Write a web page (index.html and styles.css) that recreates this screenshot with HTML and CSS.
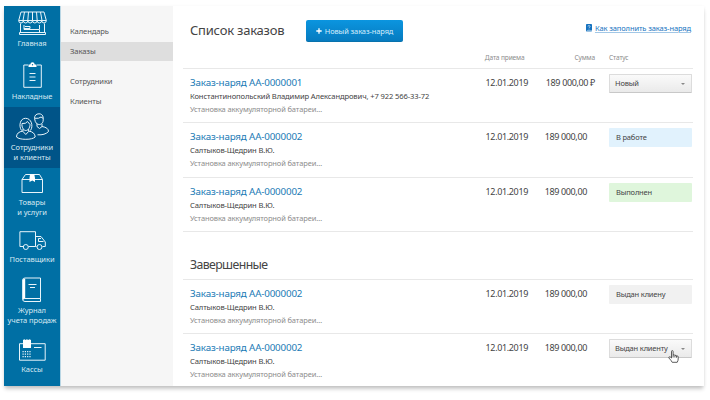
FILE: index.html
```html
<!DOCTYPE html>
<html lang="ru">
<head>
<meta charset="utf-8">
<title>Список заказов</title>
<link rel="stylesheet" href="styles.css">
</head>
<body>
<div class="window">
  <nav class="rail">
    <a class="rail-item home">
      <svg viewBox="4 6 56 32" width="56" height="32"><path d="M21 12H44L46.300 20.500H18.700ZM24.500 12L23 20.500M28.500 12L27.800 20.500M32.500 12V20.500M36.500 12L37.200 20.500M40.500 12L42 20.500"/><path d="M18.700 20.500q0 2.500 2.300 2.500t2.300-2.500q0 2.500 2.300 2.500t2.300-2.500q0 2.500 2.300 2.500t2.300-2.500q0 2.500 2.300 2.500t2.300-2.500q0 2.500 2.300 2.500t2.300-2.500q0 2.500 2.300 2.500t2.300-2.500M20.500 23.500V32.500M44.500 23.500V32.500M19.500 34.500H45.500V32.500H19.500ZM24 25V29.500H39.500V32M39.500 25V29M24 28.500H30V26.500H25"/></svg>
      <span>Главная</span>
    </a>
    <a class="rail-item notes">
      <svg viewBox="4 57 56 34" width="56" height="34"><path d="M28 65H23.800V87.300H41.300V65H37M29.500 73.500H35.500M29.500 77H35.500M29.500 80.500H35.500"/><path class="solid" d="M28.500 67V64.500H30.300Q30.500 62.300 32.500 62.300T34.700 64.500H36.500V67Z"/><circle class="hole" cx="32.500" cy="64.700" r=".7"/></svg>
      <span>Накладные</span>
    </a>
    <a class="rail-item people active">
      <svg viewBox="4 107 56 35" width="56" height="35"><path d="M34.500 118.500C34.500 115.500 36 113.800 39 113.800C42.800 113.800 43.800 117 43 121.500C42 125.500 36.800 125.500 35.300 121.500ZM34.800 118.300Q39 118.800 41 117L43.300 118.500M37 124V126.500L39.500 128.500L42 126.500V124M42 126.500Q48.500 127.500 48.500 131.500Q45 135.300 37.500 134.800"/><path d="M21.500 130.500C18.500 126 20 118.300 25.500 118.300C31.500 118.300 33.500 126 30.500 130.500M22 123.500Q26 124 27.500 121.500L30 124.500C30 128 28 130.500 25.800 130.500C23.500 130.500 21.500 127 22 123.500M23 129V131.500L25.800 134.500L28.600 131.500V129M23 131Q16.500 132 16.500 137Q19 139.300 25.800 139.300T35.200 137Q35 132 28.600 131"/></svg>
      <span>Сотрудники<br>и клиенты</span>
    </a>
    <a class="rail-item goods">
      <svg viewBox="4 168 56 29" width="56" height="29"><path d="M22 179.500L25.500 174.500H39.500L42.500 179.500V192.500H22ZM22 179.500H42.500"/><path class="solid" d="M30 174.300H34.300L35 178V182L32.300 180.500L29.500 182V178Z"/></svg>
      <span>Товары<br>и услуги</span>
    </a>
    <a class="rail-item supply">
      <svg viewBox="4 226 56 28" width="56" height="28"><path d="M23 246.500H19.900V231.700H35.500V246.500H28.500M35.500 236.500H41L45.300 242V246.500H42.500M36.500 246.500H35.500M38.500 238.500V241.500H43.500M38.500 238.500H41"/><circle cx="25.800" cy="247" r="2.500"/><circle cx="39.500" cy="247" r="2.500"/></svg>
      <span>Поставщики</span>
    </a>
    <a class="rail-item journal">
      <svg viewBox="4 272 56 33" width="56" height="33"><path d="M40.500 298.500V278H25Q22.700 278 22.700 280V299.500Q22.700 301.500 25 301.500H40.500V298.500H25M28.500 284.500H36.500M30 287.500H35"/><path class="solid" d="M22.700 279.500L25.200 278.500V298.500L22.700 300Z"/></svg>
      <span>Журнал<br>учета продаж</span>
    </a>
    <a class="rail-item cash">
      <svg viewBox="4 334 56 30" width="56" height="30"><path d="M23 343.700H19.500V360.200H45.200V343.700H31M34 347.500H41.500"/><path class="solid" d="M23 340l1.300-.8 1.300.8 1.300-.8 1.300.8 1.300-.8 1.500.8V348H23Z"/><path class="keys" d="M22.500 351.700H31M22.500 354.200H31M22.500 356.700H31"/></svg>
      <span>Кассы</span>
    </a>
  </nav>
  <nav class="submenu">
    <a>Календарь</a>
    <a class="current">Заказы</a>
    <a class="group">Сотрудники</a>
    <a>Клиенты</a>
  </nav>
  <main class="content">
    <header class="head">
      <h1>Список заказов</h1>
      <button class="create"><svg viewBox="0 0 6 6" width="6" height="6"><path d="M3 .3V5.700M.3 3H5.700"/></svg>Новый заказ-наряд</button>
      <a class="help"><svg viewBox="0 0 6 8" width="6" height="8"><rect width="6" height="7.500" rx=".7"/><path d="M2 2.500Q2 1.500 3 1.500T4 2.600Q4 3.200 3 3.800V4.400M3 5.100V5.700M.8 6.800H6"/></svg>Как заполнить заказ-наряд</a>
    </header>
    <div class="row columns"><span></span><span class="c-date">Дата приема</span><span class="c-sum">Сумма</span><span class="c-status">Статус</span></div>
    <div class="row order">
      <div class="info"><a>Заказ-наряд АА-0000001</a><p>Константинопольский Владимир Александрович, +7 922 566-33-72</p><small>Установка аккумуляторной батареи…</small></div>
      <span class="date">12.01.2019</span><span class="sum">189 000,00 ₽</span>
      <div class="status select">Новый<i></i></div>
    </div>
    <div class="row order">
      <div class="info"><a>Заказ-наряд АА-0000002</a><p>Салтыков-Щедрин В.Ю.</p><small>Установка аккумуляторной батареи…</small></div>
      <span class="date">12.01.2019</span><span class="sum short">189 000,00</span>
      <div class="status work">В работе</div>
    </div>
    <div class="row order last">
      <div class="info"><a>Заказ-наряд АА-0000002</a><p>Салтыков-Щедрин В.Ю.</p><small>Установка аккумуляторной батареи…</small></div>
      <span class="date">12.01.2019</span><span class="sum short">189 000,00</span>
      <div class="status ready">Выполнен</div>
    </div>
    <h2>Завершенные</h2>
    <div class="row order">
      <div class="info"><a>Заказ-наряд АА-0000002</a><p>Салтыков-Щедрин В.Ю.</p><small>Установка аккумуляторной батареи…</small></div>
      <span class="date">12.01.2019</span><span class="sum short">189 000,00</span>
      <div class="status given">Выдан клиену</div>
    </div>
    <div class="row order">
      <div class="info"><a>Заказ-наряд АА-0000002</a><p>Салтыков-Щедрин В.Ю.</p><small>Установка аккумуляторной батареи…</small></div>
      <span class="date">12.01.2019</span><span class="sum short">189 000,00</span>
      <div class="status select">Выдан клиенту<i></i>
        <svg class="cursor" viewBox="0 0 11 13" width="11" height="13"><path d="M3.500 8V1.500Q3.500.6 4.300.6T5.100 1.500V5Q6.600 4.300 6.900 5.400Q8.200 4.900 8.500 5.900Q10.200 5.500 10.200 7V9Q10.200 10.500 9.200 12.300H4.200Q3.300 10.500 .9 8Q.5 6.700 1.700 6.800Q2.600 7 3.500 8M5.100 5V7.500M6.900 5.400V7.500M8.500 5.900V7.700"/></svg>
      </div>
    </div>
  </main>
</div>
</body>
</html>
```

FILE: styles.css
```css
* { box-sizing: border-box; }
body {
  margin: 0;
  padding: 6px 6px 14px 4px;
  height: 400px;
  overflow: hidden;
  background: #fff;
  color: #444;
  font-family: "Noto Sans", sans-serif;
}
.window {
  display: flex;
  width: 700px;
  height: 380px;
  background: #fff;
  box-shadow: 0 4px 4px -1px rgba(0, 0, 0, .2), 0 1px 3px rgba(0, 0, 0, .08);
}
h1, h2, p { margin: 0; font-weight: 400; }
svg { display: block; flex: none; fill: none; }

/* Main navigation */
.rail { width: 57px; flex: none; background: #006fa4; border-right: 1px solid #b9d6e4; }
.rail-item { display: block; color: #d9eaf3; font-size: 7.500px; letter-spacing: -.06px; line-height: 10px; text-align: center; white-space: nowrap; }
.rail-item svg { stroke: #e8f4fa; stroke-width: 1; stroke-linejoin: round; }
.rail-item span { display: block; }
.rail-item .solid { fill: #fff; stroke: none; }
.rail-item .hole { fill: #006fa4; stroke: none; }
.rail-item .keys { stroke-dasharray: 1.2 1.1; stroke-width: 1.2; }
.home { height: 51px; }
.notes { height: 50px; }
.people { height: 61px; }
.goods { height: 58px; }
.supply { height: 46px; }
.journal { height: 62px; }
.cash { height: 52px; }
.active { background: #005488; }

/* Section menu */
.submenu { width: 112px; flex: none; padding-top: 16px; background: #f6f6f6; font-size: 7.600px; letter-spacing: -.1px; }
.submenu a { display: block; height: 19.500px; padding-left: 9px; line-height: 19.500px; color: #555; }
.submenu .current { background: #dedede; }
.submenu .group { margin-top: 11px; }

/* Orders */
.content { flex: none; width: 531px; padding-left: 10px; }
.head { display: flex; align-items: flex-start; height: 43px; width: 510px; padding-left: 7px; }
h1 { width: 116px; padding-top: 15px; font-size: 13px; letter-spacing: -.22px; line-height: 18px; white-space: nowrap; }
.create {
  display: flex; align-items: center; justify-content: center; gap: 3px;
  width: 97px; height: 22px; margin: 14px 0 0; padding: 0;
  border: 0; border-bottom: 1px solid #0872ad; border-radius: 2px;
  background: linear-gradient(#0b95df, #067bc0);
  color: #d5edfb; font: 7.400px "Noto Sans", sans-serif; letter-spacing: -.06px; white-space: nowrap;
}
.create svg { stroke: #fff; stroke-width: 1.300; }
.help { display: flex; gap: 3px; margin: 18px 2px 0 auto; color: #1673c0; font-size: 7.500px; letter-spacing: -.11px; line-height: 9px; white-space: nowrap; text-decoration: underline rgba(22, 115, 192, .4); text-decoration-thickness: .5px; }
.help rect { fill: #1673c0; }
.help path { stroke: #fff; stroke-width: .6; }
.row { display: grid; grid-template-columns: 287px 51px 67px 1fr; width: 510px; padding-left: 7px; }
.columns { height: 18.500px; font-size: 6.600px; letter-spacing: -.15px; line-height: 17px; color: #8c8c8c; white-space: nowrap; }
.c-date { padding-right: 3.500px; text-align: right; }
.c-sum { text-align: right; }
.c-status { padding-left: 14px; }
.order { height: 54.500px; padding-top: 5px; border-top: 1px solid #e8e8e8; white-space: nowrap; }
.info { line-height: 13px; }
.info a { display: block; height: 15px; font-size: 9.800px; letter-spacing: -.16px; line-height: 18px; color: #1a7ab5; }
.info p { height: 13px; margin-top: 1px; font-size: 7.600px; letter-spacing: -.12px; line-height: 13px; }
.info small { display: block; font-size: 7.500px; letter-spacing: -.13px; line-height: 13px; color: #8c8c8c; }
.date, .sum { font-size: 9px; letter-spacing: -.36px; line-height: 17px; text-align: right; }
.sum.short { padding-right: 8px; }
.status { position: relative; width: 83px; height: 19px; margin-left: 14px; padding-left: 7px; border-radius: 1px; font-size: 7.500px; letter-spacing: -.17px; line-height: 19px; }
.select { padding-left: 5px; border: 1px solid #dcdcdc; border-bottom-color: #c8c8c8; background: linear-gradient(#fafafa, #eaeaea); line-height: 17px; }
.select i { position: absolute; right: 6px; top: 8px; border: 2px solid transparent; border-top-color: #888; border-bottom: 0; }
.work { background: #e1f2fd; }
.ready { background: #dff6dc; }
.given { background: #f1f1f1; }
.last { height: 55.500px; border-bottom: 1px solid #e8e8e8; }
h2 { height: 46.500px; padding: 24px 0 0 7px; font-size: 12.300px; letter-spacing: -.6px; line-height: 18px; }
.cursor { position: absolute; left: 58px; top: 10px; fill: #fff; stroke: #333; stroke-width: .8; }
```
